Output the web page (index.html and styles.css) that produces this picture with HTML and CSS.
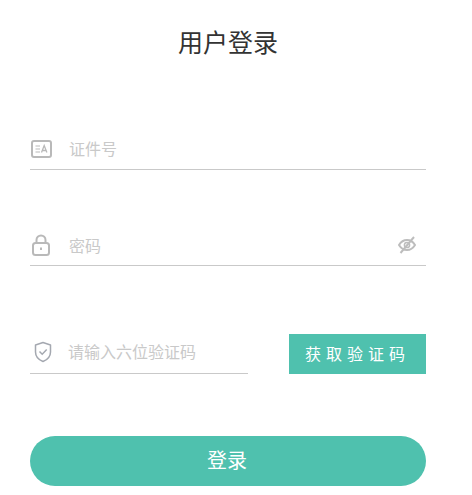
FILE: index.html
```html
<!DOCTYPE html>
<html lang="zh-cn">
  <head>
    <meta charset="UTF-8" />
    <meta name="viewport" content="width=device-width, initial-scale=1.0" />
    <title>用户登录</title>
    <link rel="stylesheet" href="styles.css">
  </head>

  <body>
    <div class="container">
      <h1 class="title">用户登录</h1>

      <div class="field field-id">
        <svg class="icon" width="21" height="18" viewBox="0 0 21 18" fill="none" stroke="#b9b9b9">
          <rect x="1" y="1" width="19" height="16" rx="2" stroke-width="2" />
          <path d="M4.500 6h4.500M4.500 9h4.500M4.500 12h4.500" stroke-width="1.200" />
          <path d="M10.500 12.500l2.700-7 2.700 7M11.500 10.500h3.400" stroke-width="1.300" />
        </svg>
        <span class="placeholder">证件号</span>
      </div>

      <div class="field field-password">
        <svg class="icon" width="20" height="22" viewBox="0 0 20 22" fill="none" stroke="#b9b9b9" stroke-width="2">
          <rect x="2" y="9" width="16" height="12" rx="2.500" />
          <path d="M5.500 9V6a4.500 4.500 0 0 1 9 0v3" />
          <path d="M10 13.500v2.500" />
        </svg>
        <span class="placeholder">密码</span>
        <svg class="eye" width="18" height="18" viewBox="0 0 18 18" fill="none" stroke="#bdbdbd" stroke-width="2">
          <path d="M1 9c2-3.300 4.700-5 8-5s6 1.700 8 5c-2 3.300-4.700 5-8 5s-6-1.700-8-5z" />
          <circle cx="9" cy="9" r="2.600" stroke-width="1.500" />
          <path d="M2.500 17L16 1" />
        </svg>
      </div>

      <div class="code-row">
        <div class="field field-code">
          <svg class="icon" width="18" height="22" viewBox="0 0 18 22" fill="none" stroke="#a4a8b0" stroke-width="1.500">
            <path d="M9 1.500l7.500 2.500v7c0 4.500-3.200 7.800-7.500 9.500C4.700 18.800 1.500 15.500 1.500 11V4z" stroke-linejoin="round" />
            <path d="M5.500 10.500l2.700 2.700 4.500-4.700" />
          </svg>
          <span class="placeholder">请输入六位验证码</span>
        </div>
        <div class="code-btn">获取验证码</div>
      </div>

      <div class="submit">登录</div>
    </div>
  </body>
</html>
```

FILE: styles.css
```css
* {
  box-sizing: border-box;
}
body {
  margin: 0;
  background-color: #fff;
  font-family: "Liberation Sans", "Noto Sans CJK SC", sans-serif;
}
.container {
  width: 396px;
  margin-left: 30px;
}
.title {
  margin: 0;
  padding-top: 25px;
  height: 129px;
  font-size: 25px;
  line-height: 36px;
  font-weight: 400;
  text-align: center;
  color: #333;
}
.field {
  display: flex;
  align-items: center;
  height: 41px;
  border-bottom: 1px solid #c9c9c9;
}
.field-password {
  margin-top: 55px;
}
.icon {
  flex: none;
  margin-left: 1px;
}
.placeholder {
  margin-left: 17px;
  margin-bottom: 2px;
  font-size: 16px;
  color: #c9c9c9;
}
.field-password .placeholder {
  margin-left: 18px;
  margin-bottom: 0;
}
.eye {
  margin-left: auto;
  margin-right: 10px;
}
.code-row {
  display: flex;
  justify-content: space-between;
  align-items: flex-end;
  margin-top: 68px;
}
.field-code {
  width: 218px;
  height: 40px;
  padding-bottom: 3px;
}
.field-code .icon {
  margin-left: 4px;
}
.field-code .placeholder {
  margin-left: 16px;
}
.code-btn {
  width: 137px;
  height: 40px;
  line-height: 42px;
  text-align: center;
  font-size: 16px;
  letter-spacing: 5px;
  color: #fff;
  background-color: #4fc1ae;
}
.submit {
  height: 50px;
  margin-top: 62px;
  padding-right: 2px;
  border-radius: 25px;
  line-height: 50px;
  text-align: center;
  font-size: 20px;
  color: #fff;
  background-color: #4fc1ae;
}
```
